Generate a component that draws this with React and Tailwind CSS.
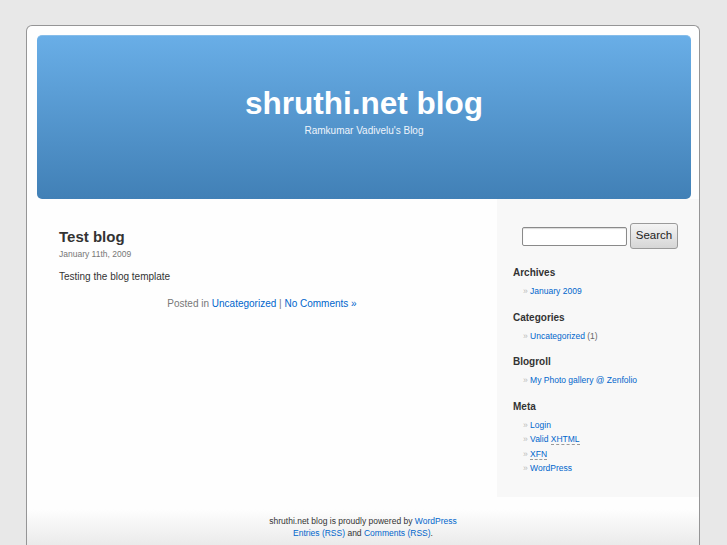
import React from 'react';

const archives = [{ label: 'January 2009' }];
const categories = [{ label: 'Uncategorized', count: '(1)' }];
const blogroll = [{ label: 'My Photo gallery @ Zenfolio' }];

function Widget({ title, first, children }) {
  return (
    <div className={first ? 'mt-[17px]' : 'mt-[12px]'}>
      <h2 className="text-[10px] leading-[14px] font-bold text-[#333]">{title}</h2>
      <ul className="mt-[4px] pl-[10px]">{children}</ul>
    </div>
  );
}

function Item({ children }) {
  return (
    <li className="h-[14.5px] text-[8.5px] leading-[14.5px] text-[#333]">
      <span className="text-[#bbb]">»&nbsp;</span>
      {children}
    </li>
  );
}

function App() {
  return (
    <div className="min-h-screen bg-[#e8e8e8] pt-[25px] font-['Liberation_Sans',Arial,sans-serif] text-[#333]">
      <div className="ml-[26px] w-[674px] rounded-t-[6px] border border-b-0 border-[#959596] bg-[#fefefe]">
        <div className="pt-[9px] pl-[10px] pr-[8px]">
          <div className="h-[164px] rounded-[5px] border-t border-[#86bdea] bg-gradient-to-b from-[#69aee7] to-[#4180b6] pt-[49px] text-center text-white">
            <h1 className="text-[31.5px] leading-[36px] font-bold">shruthi.net blog</h1>
            <p className="mt-[3px] text-[10px] leading-[14px] text-[#eef4fb]">Ramkumar Vadivelu's Blog</p>
          </div>
        </div>

        <div className="flex h-[298px]">
          <div className="w-[470px] pl-[32px] pr-[20px] pt-[28px]">
            <h2 className="text-[15px] leading-[20px] font-bold text-[#333]">Test blog</h2>
            <div className="mt-[1px] text-[8.5px] leading-[12px] text-[#777]">January 11th, 2009</div>
            <p className="mt-[10px] text-[10px] leading-[14px] text-[#333]">Testing the blog template</p>
            <p className="mt-[13px] -ml-[32px] mr-[-20px] text-center text-[10px] leading-[14px] text-[#777]">
              Posted in <a className="text-[#06c]">Uncategorized</a> | <a className="text-[#06c]">No Comments »</a>
            </p>
          </div>

          <div className="w-[202px] bg-[#f8f8f8] pl-[16px] pt-[24px]">
            <div className="flex items-center pl-[9px]">
              <input
                type="text"
                className="h-[19px] w-[105px] rounded-[2px] border border-[#8a8a8a] bg-white shadow-[inset_0_1px_1px_rgba(0,0,0,0.15)]"
              />
              <button className="ml-[3px] h-[26px] w-[48px] rounded-[3px] border border-[#9a9a9a] bg-gradient-to-b from-[#f4f4f4] to-[#d6d6d6] text-[11.5px] text-[#222]">
                Search
              </button>
            </div>

            <Widget title="Archives" first>
              {archives.map(a => (
                <Item key={a.label}><a className="text-[#06c]">{a.label}</a></Item>
              ))}
            </Widget>
            <Widget title="Categories">
              {categories.map(c => (
                <Item key={c.label}><a className="text-[#06c]">{c.label}</a> <span className="text-[#666]">{c.count}</span></Item>
              ))}
            </Widget>
            <Widget title="Blogroll">
              {blogroll.map(b => (
                <Item key={b.label}><a className="text-[#06c]">{b.label}</a></Item>
              ))}
            </Widget>
            <Widget title="Meta">
              <Item><a className="text-[#06c]">Login</a></Item>
              <Item>
                <a className="text-[#06c]">Valid <abbr className="border-b border-dashed border-[#999] no-underline">XHTML</abbr></a>
              </Item>
              <Item>
                <a className="text-[#06c]"><abbr className="border-b border-dashed border-[#999] no-underline">XFN</abbr></a>
              </Item>
              <Item><a className="text-[#06c]">WordPress</a></Item>
            </Widget>
          </div>
        </div>

        <div className="h-[60px] bg-gradient-to-b from-[#fefefe] from-[20%] to-[#e4e4e4] pt-[18px] text-center text-[8.5px] leading-[12px] text-[#333]">
          <p>shruthi.net blog is proudly powered by <a className="text-[#06c]">WordPress</a></p>
          <p><a className="text-[#06c]">Entries (RSS)</a> and <a className="text-[#06c]">Comments (RSS)</a>.</p>
        </div>
      </div>
    </div>
  );
}

export default App;
